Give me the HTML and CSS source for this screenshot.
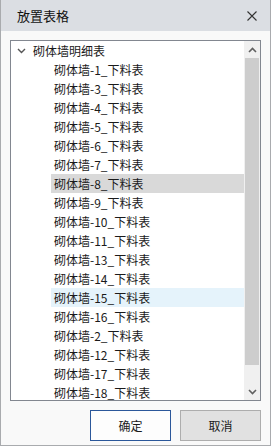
FILE: index.html
```html
<!DOCTYPE html>
<html lang="zh-CN">
<head>
    <meta charset="UTF-8">
    <title>放置表格</title>
    <link rel="stylesheet" href="styles.css">
</head>
<body>
    <div class="window">
        <div class="title-bar">
            <span class="title">放置表格</span>
            <svg class="close" width="10" height="10" viewBox="0 0 10 10">
                <path d="M0.5 0.5 L9.5 9.5 M9.5 0.5 L0.5 9.5" stroke="#333" stroke-width="1.1" fill="none"/>
            </svg>
        </div>

        <div class="content">
            <div class="tree-box">
                <div class="tree">
                    <div class="row header">
                        <svg class="chevron" width="9" height="6" viewBox="0 0 9 6">
                            <path d="M1 1 L4.5 4.5 L8 1" stroke="#555" stroke-width="1.4" fill="none"/>
                        </svg>
                        <span>砌体墙明细表</span>
                    </div>
                    <div class="row item">砌体墙-1_下料表</div>
                    <div class="row item">砌体墙-3_下料表</div>
                    <div class="row item">砌体墙-4_下料表</div>
                    <div class="row item">砌体墙-5_下料表</div>
                    <div class="row item">砌体墙-6_下料表</div>
                    <div class="row item">砌体墙-7_下料表</div>
                    <div class="row item selected">砌体墙-8_下料表</div>
                    <div class="row item">砌体墙-9_下料表</div>
                    <div class="row item">砌体墙-10_下料表</div>
                    <div class="row item">砌体墙-11_下料表</div>
                    <div class="row item">砌体墙-13_下料表</div>
                    <div class="row item">砌体墙-14_下料表</div>
                    <div class="row item hover">砌体墙-15_下料表</div>
                    <div class="row item">砌体墙-16_下料表</div>
                    <div class="row item">砌体墙-2_下料表</div>
                    <div class="row item">砌体墙-12_下料表</div>
                    <div class="row item">砌体墙-17_下料表</div>
                    <div class="row item">砌体墙-18_下料表</div>
                </div>
                <div class="scrollbar">
                    <div class="arrow">
                        <svg width="9" height="6" viewBox="0 0 9 6">
                            <path d="M1 5 L4.5 1.5 L8 5" stroke="#606060" stroke-width="1.6" fill="none"/>
                        </svg>
                    </div>
                    <div class="track"><div class="thumb"></div></div>
                    <div class="arrow">
                        <svg width="9" height="6" viewBox="0 0 9 6">
                            <path d="M1 1 L4.5 4.5 L8 1" stroke="#606060" stroke-width="1.6" fill="none"/>
                        </svg>
                    </div>
                </div>
            </div>

            <div class="buttons">
                <button class="btn primary">确定</button>
                <button class="btn">取消</button>
            </div>
        </div>
    </div>
</body>
</html>
```

FILE: styles.css
```css
body {
    margin: 0;
    font-family: "Noto Sans CJK SC", "Noto Sans", sans-serif;
    font-size: 12px;
    color: #1a1a1a;
    background: #f9f9f9;
}
.window {
    width: 271px;
    height: 446px;
    box-sizing: border-box;
    border: 1px solid #a9abae;
    border-top: none;
    background: #f9f9f9;
    display: flex;
    flex-direction: column;
}
.title-bar {
    height: 31px;
    background: #dbdee3;
    display: flex;
    align-items: center;
    justify-content: space-between;
    padding: 0 13px 0 16px;
}
.title {
    font-size: 13px;
    color: #111;
}
.content {
    padding: 9px 9px 0 9px;
}
.tree-box {
    height: 361px;
    box-sizing: border-box;
    border: 1px solid #828790;
    background: #fff;
    display: flex;
}
.tree {
    flex: 1;
    overflow: hidden;
}
.row {
    height: 19px;
    line-height: 19px;
    white-space: nowrap;
}
.header {
    display: flex;
    align-items: center;
    padding-left: 6px;
}
.chevron {
    margin-right: 7px;
}
.item {
    margin-left: 40px;
    padding-left: 3px;
}
.selected {
    background: #d9d9d9;
}
.hover {
    background: #e5f3fb;
}
.scrollbar {
    width: 16px;
    background: #f0f0f0;
    display: flex;
    flex-direction: column;
}
.arrow {
    height: 17px;
    display: flex;
    align-items: center;
    justify-content: center;
}
.track {
    flex: 1;
    padding: 0 1px;
}
.thumb {
    height: 307px;
    background: #cdcdcd;
}
.buttons {
    display: flex;
    justify-content: flex-end;
    gap: 9px;
    margin-top: 9px;
}
.btn {
    width: 81px;
    height: 31px;
    font-family: "Noto Sans CJK SC", "Noto Sans", sans-serif;
    font-size: 12px;
    color: #1a1a1a;
    background: #e1e1e1;
    border: 1px solid #adadad;
    padding: 0;
}
.btn.primary {
    background: #fdfdfd;
    border: 1px solid #2b579a;
}
```
